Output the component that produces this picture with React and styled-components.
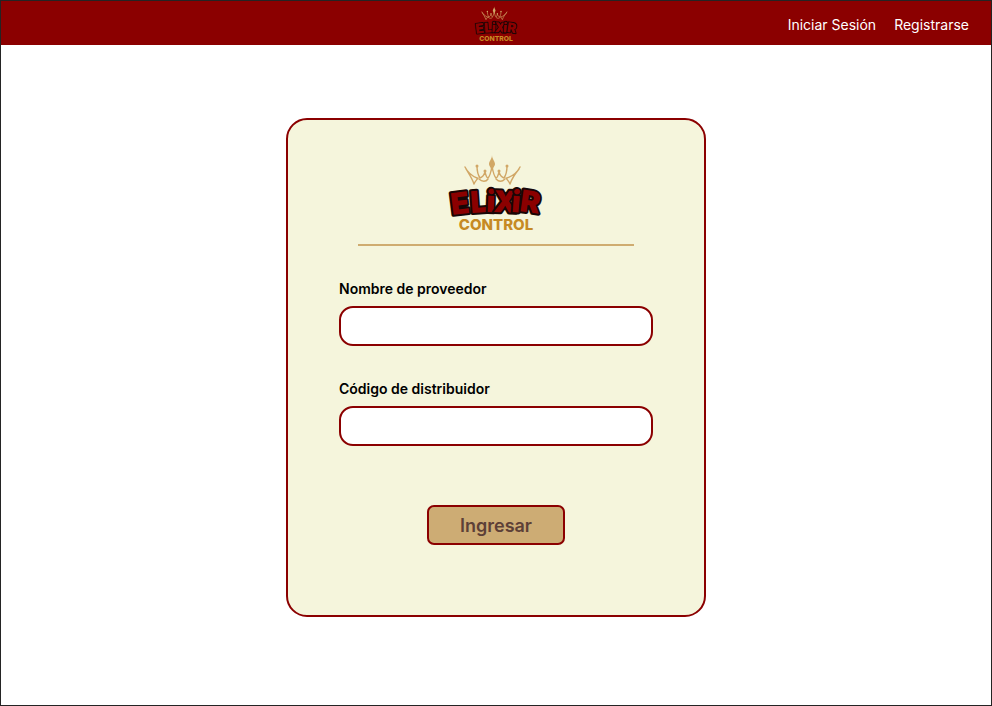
import React from "react";
import styled, { createGlobalStyle } from "styled-components";

const GlobalStyle = createGlobalStyle`
  * { box-sizing: border-box; }
  body { margin: 0; background: #fff; font-family: Inter, sans-serif; }
`;

const Page = styled.div`
  display: flex;
  flex-direction: column;
  min-height: 100vh;
  border: 1px solid #242424;
`;

const TopBar = styled.header`
  display: grid;
  grid-template-columns: 1fr auto 1fr;
  align-items: center;
  height: 44px;
  padding: 0 22px;
  background: #8b0000;
`;

const Nav = styled.nav`
  grid-column: 3;
  justify-self: end;
  display: flex;
  gap: 18px;
  padding-top: 3px;
`;

const NavLink = styled.a`
  color: #fff;
  font-size: 14px;
  line-height: 20px;
  text-decoration: none;
`;

const BrandLink = styled.a`
  grid-column: 2;
  display: flex;
`;

const Main = styled.main`
  display: flex;
  justify-content: center;
  padding: 73px 24px;
`;

const Card = styled.form`
  display: flex;
  flex-direction: column;
  align-items: center;
  width: 100%;
  max-width: 420px;
  padding: 30px 51px 70px;
  border: 2px solid #8b0000;
  border-radius: 21px;
  background: #f5f5dc;
`;

const Divider = styled.hr`
  width: 276px;
  max-width: 100%;
  height: 2px;
  margin: 9px 0 33px;
  border: 0;
  background: #cfac70;
`;

const Field = styled.div`
  display: flex;
  flex-direction: column;
  gap: 7px;
  width: 100%;
  margin-bottom: 33px;
`;

const Label = styled.label`
  color: #000;
  font-size: 14px;
  font-weight: 600;
  line-height: 20px;
`;

const Input = styled.input`
  width: 100%;
  height: 40px;
  padding: 0 14px;
  border: 2px solid #8b0000;
  border-radius: 14px;
  background: #fff;
  font: 14px Inter, sans-serif;
`;

const Submit = styled.button`
  width: 138px;
  height: 40px;
  margin-top: 26px;
  padding: 0;
  border: 2px solid #8b0000;
  border-radius: 7px;
  background: #cdac74;
  color: #5d4037;
  font: 600 18px Inter, sans-serif;
`;

const LogoArt = styled.svg`
  display: block;
  width: ${(p) => p.$width}px;
  height: ${(p) => p.$height}px;

  .word {
    font: 900 30px Inter, sans-serif;
    fill: #8b0000;
    stroke: #180606;
    stroke-width: 4;
    stroke-linejoin: round;
    paint-order: stroke;
  }
  .tag { font: 800 15px Inter, sans-serif; fill: #c68a24; }
`;

function Logo({ width, height }) {
  return (
    <LogoArt $width={width} $height={height} viewBox="1 0 110 85" role="img" aria-label="Elixir Control">
      <g fill="none" stroke="#d1a766" strokeWidth="1.4" strokeLinecap="round" strokeLinejoin="round">
        <path d="M25 17C28 23 32 26 37 28M26 19C29 24 32 28 34 34C35 31 37 30 38 28" />
        <path d="M37 16C37 21 38 25 40 28C43 27 44 25 45 22C46 26 47 28 48 28C50 26 51 22 52 16" />
        <path d="M52 16C53 22 54 26 56 28C57 28 58 26 59 22C60 25 61 27 64 28C66 25 67 21 67 16" />
        <path d="M80 17C77 23 73 26 67 28M79 19C75 24 72 28 70 34C69 31 67 30 66 28" />
        <path d="M39 29C42 32 46 32 48 29M56 29C59 32 62 32 65 29" />
      </g>
      <g fill="#d1a766">
        <path d="M52 5C52 9 55 11 55 14C55 16 53 17 52 22C51 17 49 16 49 14C49 11 52 9 52 5Z" />
        <circle cx="37" cy="16" r="1.5" />
        <circle cx="67" cy="16" r="1.5" />
        <circle cx="45" cy="21" r="1.5" />
        <circle cx="59" cy="21" r="1.5" />
      </g>
      <text className="word" x="12 31 46 53 71 79" y="65 63 62 62 62 61" rotate="-7 -4 2 2 4 8">ELiXiR</text>
      <text className="tag" x="56" y="80" textAnchor="middle">CONTROL</text>
    </LogoArt>
  );
}

export default function App() {
  return (
    <>
      <GlobalStyle />
      <Page>
        <TopBar>
          <BrandLink href="#inicio">
            <Logo width={50} height={39} />
          </BrandLink>
          <Nav>
            <NavLink href="#iniciar-sesion">Iniciar Sesión</NavLink>
            <NavLink href="#registrarse">Registrarse</NavLink>
          </Nav>
        </TopBar>
        <Main>
          <Card>
            <Logo width={110} height={85} />
            <Divider />
            <Field>
              <Label htmlFor="proveedor">Nombre de proveedor</Label>
              <Input id="proveedor" type="text" />
            </Field>
            <Field>
              <Label htmlFor="distribuidor">Código de distribuidor</Label>
              <Input id="distribuidor" type="text" />
            </Field>
            <Submit type="submit">Ingresar</Submit>
          </Card>
        </Main>
      </Page>
    </>
  );
}
